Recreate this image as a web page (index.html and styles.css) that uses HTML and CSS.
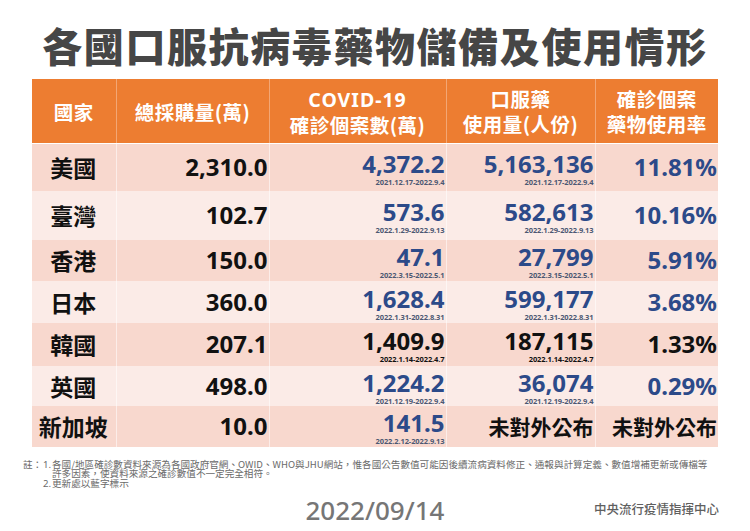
FILE: index.html
```html
<!DOCTYPE html>
<html lang="zh-Hant">
<head>
<meta charset="utf-8">
<title>各國口服抗病毒藥物儲備及使用情形</title>
<link rel="stylesheet" href="styles.css">
</head>
<body>
<div class="page">
  <h1 class="title">各國口服抗病毒藥物儲備及使用情形</h1>
  <table class="stock">
    <colgroup>
      <col class="w-country"><col class="w-buy"><col class="w-cases"><col class="w-used"><col class="w-rate">
    </colgroup>
    <thead>
      <tr>
        <th>國家</th>
        <th>總採購量(萬)</th>
        <th><span class="latin">COVID-19</span><br>確診個案數(萬)</th>
        <th>口服藥<br>使用量(人份)</th>
        <th>確診個案<br>藥物使用率</th>
      </tr>
    </thead>
    <tbody>
      <tr>
        <td class="country">美國</td>
        <td class="buy">2,310.0</td>
        <td class="num blue"><div class="stack"><span class="val">4,372.2</span><span class="period">2021.12.17-2022.9.4</span></div></td>
        <td class="num blue"><div class="stack"><span class="val">5,163,136</span><span class="period">2021.12.17-2022.9.4</span></div></td>
        <td class="rate blue">11.81%</td>
      </tr>
      <tr>
        <td class="country">臺灣</td>
        <td class="buy">102.7</td>
        <td class="num blue"><div class="stack"><span class="val">573.6</span><span class="period">2022.1.29-2022.9.13</span></div></td>
        <td class="num blue"><div class="stack"><span class="val">582,613</span><span class="period">2022.1.29-2022.9.13</span></div></td>
        <td class="rate blue">10.16%</td>
      </tr>
      <tr>
        <td class="country">香港</td>
        <td class="buy">150.0</td>
        <td class="num blue"><div class="stack"><span class="val">47.1</span><span class="period">2022.3.15-2022.5.1</span></div></td>
        <td class="num blue"><div class="stack"><span class="val">27,799</span><span class="period">2022.3.15-2022.5.1</span></div></td>
        <td class="rate blue">5.91%</td>
      </tr>
      <tr>
        <td class="country">日本</td>
        <td class="buy">360.0</td>
        <td class="num blue"><div class="stack"><span class="val">1,628.4</span><span class="period">2022.1.31-2022.8.31</span></div></td>
        <td class="num blue"><div class="stack"><span class="val">599,177</span><span class="period">2022.1.31-2022.8.31</span></div></td>
        <td class="rate blue">3.68%</td>
      </tr>
      <tr>
        <td class="country">韓國</td>
        <td class="buy">207.1</td>
        <td class="num black"><div class="stack"><span class="val">1,409.9</span><span class="period">2022.1.14-2022.4.7</span></div></td>
        <td class="num black"><div class="stack"><span class="val">187,115</span><span class="period">2022.1.14-2022.4.7</span></div></td>
        <td class="rate black">1.33%</td>
      </tr>
      <tr>
        <td class="country">英國</td>
        <td class="buy">498.0</td>
        <td class="num blue"><div class="stack"><span class="val">1,224.2</span><span class="period">2021.12.19-2022.9.4</span></div></td>
        <td class="num blue"><div class="stack"><span class="val">36,074</span><span class="period">2021.12.19-2022.9.4</span></div></td>
        <td class="rate blue">0.29%</td>
      </tr>
      <tr>
        <td class="country">新加坡</td>
        <td class="buy">10.0</td>
        <td class="num blue"><div class="stack"><span class="val">141.5</span><span class="period">2022.2.12-2022.9.13</span></div></td>
        <td class="na">未對外公布</td>
        <td class="na">未對外公布</td>
      </tr>
    </tbody>
  </table>
  <div class="notes">
    <span class="notes-label">註：</span>
    <ol class="notes-list">
      <li><span class="n">1.</span><span class="t">各國/地區確診數資料來源為各國政府官網、OWID、WHO與JHU網站，惟各國公告數值可能因後續流病資料修正、通報與計算定義、數值增補更新或傳檔等<br>許多因素，使資料來源之確診數值不一定完全相符。</span></li>
      <li><span class="n">2.</span><span class="t">更新處以藍字標示</span></li>
    </ol>
  </div>
  <footer class="footer">
    <span class="spacer"></span>
    <span class="date">2022/09/14</span>
    <span class="org">中央流行疫情指揮中心</span>
  </footer>
</div>
</body>
</html>
```

FILE: styles.css
```css
html, body {
  margin: 0;
  padding: 0;
  background: #ffffff;
}

body {
  font-family: "Noto Sans", "Noto Sans CJK TC", sans-serif;
  color: #111111;
}

.page {
  width: 750px;
  height: 531px;
  box-sizing: border-box;
  padding: 0 32px;
  overflow: hidden;
}

.title {
  margin: 0;
  padding-top: 21px;
  height: 79px;
  box-sizing: border-box;
  font-family: "Noto Sans CJK TC", sans-serif;
  font-weight: 900;
  font-size: 40px;
  line-height: 48px;
  letter-spacing: 1.6px;
  text-align: center;
  color: #464646;
  white-space: nowrap;
}

.stock {
  width: 686px;
  border-collapse: collapse;
  table-layout: fixed;
}

.w-country { width: 84px; }
.w-buy { width: 153px; }
.w-cases { width: 177px; }
.w-used { width: 149px; }
.w-rate { width: 123px; }

.stock th {
  background: #ed7d31;
  color: #ffffff;
  font-family: "Noto Sans CJK TC", sans-serif;
  font-weight: 700;
  font-size: 19.5px;
  line-height: 25px;
  letter-spacing: 0.5px;
  height: 64px;
  padding: 0;
  text-align: center;
  vertical-align: middle;
  border-left: 1px solid #f3a674;
  border-bottom: 1px solid #ffffff;
}

.stock th:first-child { border-left: none; }

.stock th .latin {
  font-family: "Noto Sans", sans-serif;
  letter-spacing: 1px;
}

.stock td {
  padding: 0 1px 0 0;
  border-left: 1px solid rgba(255, 255, 255, 0.55);
  vertical-align: middle;
  text-align: right;
  font-weight: 700;
  white-space: nowrap;
}

.stock td:first-child { border-left: none; }

.stock tbody tr:nth-child(odd) td { background: #f8d8ce; }
.stock tbody tr:nth-child(even) td { background: #fbebe7; }

.stock tbody tr:nth-child(1) { height: 47px; }
.stock tbody tr:nth-child(2) { height: 49px; }
.stock tbody tr:nth-child(3) { height: 41px; }
.stock tbody tr:nth-child(4) { height: 42px; }
.stock tbody tr:nth-child(5) { height: 43px; }
.stock tbody tr:nth-child(6) { height: 40px; }
.stock tbody tr:nth-child(7) { height: 41px; }

.country {
  text-align: center !important;
  font-family: "Noto Sans CJK TC", sans-serif;
  font-size: 23px;
  line-height: 26px;
  color: #111111;
}

.buy {
  font-size: 24px;
  line-height: 26px;
  color: #111111;
}

.num {
  padding-top: 6px !important;
}

.stack {
  display: flex;
  flex-direction: column;
  align-items: flex-end;
}

.val {
  font-size: 24px;
  line-height: 22px;
}

.period {
  font-size: 7.5px;
  line-height: 10px;
  margin-top: 2px;
  font-weight: 700;
  letter-spacing: -0.1px;
}

.blue .val, .rate.blue { color: #2c4a89; }
.blue .period { color: #4c5873; }
.black .val, .rate.black, .black .period { color: #111111; }

.rate {
  font-size: 24px;
  line-height: 26px;
}

.na {
  font-family: "Noto Sans CJK TC", sans-serif;
  font-size: 21px;
  line-height: 26px;
  color: #111111;
}

.notes {
  display: flex;
  margin: 13px 0 0 -9px;
  font-family: "Noto Sans CJK TC", sans-serif;
  font-size: 9.6px;
  line-height: 9.8px;
  color: #6a6a6a;
}

.notes-label {
  flex: none;
  width: 20px;
}

.notes-list {
  margin: 0;
  padding: 0;
  list-style: none;
  width: 680px;
  white-space: nowrap;
}

.notes-list li {
  display: flex;
}

.notes-list .n {
  flex: none;
  width: 9px;
  font-family: "Noto Sans", sans-serif;
}

.footer {
  display: grid;
  grid-template-columns: 1fr auto 1fr;
  align-items: center;
  margin-top: 6px;
  height: 30px;
}

.date {
  font-family: "Noto Sans", sans-serif;
  font-size: 26px;
  line-height: 30px;
  color: #767676;
  font-weight: 500;
}

.org {
  justify-self: end;
  margin-right: -1px;
  margin-top: -2px;
  font-family: "Noto Sans CJK TC", sans-serif;
  font-size: 12.5px;
  font-weight: 500;
  color: #5f5f5f;
  line-height: 16px;
}
```
